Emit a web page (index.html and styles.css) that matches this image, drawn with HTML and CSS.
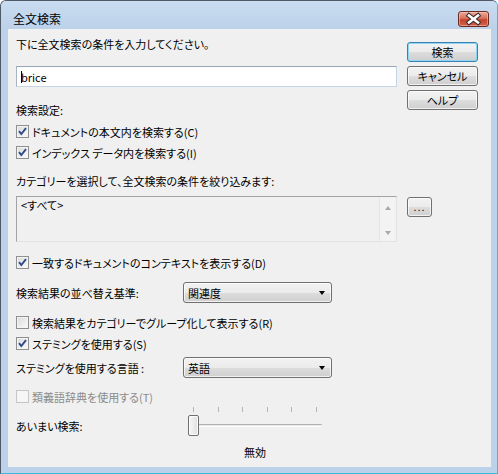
FILE: index.html
```html
<!DOCTYPE html>
<html lang="ja">
<head>
<meta charset="utf-8">
<title>全文検索</title>
<link rel="stylesheet" href="styles.css">
</head>
<body>
<div class="window">
  <div class="titlebar">
    <span class="title">全文検索</span>
    <span class="close"><svg width="29" height="14" viewBox="0 0 29 14"><path d="M10 3.5 L19 10.5 M19 3.5 L10 10.5" stroke="#3a2a28" stroke-width="4.6" stroke-linecap="square"/><path d="M10 3.5 L19 10.5 M19 3.5 L10 10.5" stroke="#ffffff" stroke-width="2.6" stroke-linecap="square"/></svg></span>
  </div>
  <div class="client">
    <div class="top">
      <div class="left-col">
        <div class="text first-label">下に全文検索の条件を入力してください。</div>
        <div class="input"><span class="caret"></span>brice</div>
        <div class="text settings-label">検索設定:</div>
        <div class="check-row first-check">
          <span class="cb"><svg width="11" height="11" viewBox="0 0 11 11"><path d="M2 5.2 L4.3 8 L9 2.2" fill="none" stroke="#2c4a8a" stroke-width="1.9"/></svg></span>
          <span class="text">ドキュメントの本文内を検索する(C)</span>
        </div>
        <div class="check-row">
          <span class="cb"><svg width="11" height="11" viewBox="0 0 11 11"><path d="M2 5.2 L4.3 8 L9 2.2" fill="none" stroke="#2c4a8a" stroke-width="1.9"/></svg></span>
          <span class="text">インデックス データ内を検索する(I)</span>
        </div>
        <div class="text category-label">カテゴリーを選択して、全文検索の条件を絞り込みます:</div>
      </div>
      <div class="buttons">
        <div class="btn default">検索</div>
        <div class="btn">キャンセル</div>
        <div class="btn">ヘルプ</div>
      </div>
    </div>
    <div class="list-row">
      <div class="listbox">
        <div class="list-items text">&lt;すべて&gt;</div>
        <div class="scrollbar"><span class="arr-up"></span><span class="arr-down"></span></div>
      </div>
      <div class="btn dots">...</div>
    </div>
    <div class="check-row context-row">
      <span class="cb"><svg width="11" height="11" viewBox="0 0 11 11"><path d="M2 5.2 L4.3 8 L9 2.2" fill="none" stroke="#2c4a8a" stroke-width="1.9"/></svg></span>
      <span class="text">一致するドキュメントのコンテキストを表示する(D)</span>
    </div>
    <div class="field-row sort-row">
      <span class="field-label text">検索結果の並べ替え基準:</span>
      <div class="combo"><span class="text">関連度</span><span class="combo-arrow"></span></div>
    </div>
    <div class="check-row group-row">
      <span class="cb"></span>
      <span class="text">検索結果をカテゴリーでグループ化して表示する(R)</span>
    </div>
    <div class="check-row">
      <span class="cb"><svg width="11" height="11" viewBox="0 0 11 11"><path d="M2 5.2 L4.3 8 L9 2.2" fill="none" stroke="#2c4a8a" stroke-width="1.9"/></svg></span>
      <span class="text">ステミングを使用する(S)</span>
    </div>
    <div class="field-row lang-row">
      <span class="field-label text">ステミングを使用する言語 :</span>
      <div class="combo"><span class="text">英語</span><span class="combo-arrow"></span></div>
    </div>
    <div class="check-row disabled thesaurus-row">
      <span class="cb"></span>
      <span class="text">類義語辞典を使用する(T)</span>
    </div>
    <div class="slider-row">
      <span class="field-label text fuzzy-label">あいまい検索:</span>
      <div class="slider">
        <div class="ticks"><i></i><i></i><i></i><i></i><i></i><i></i></div>
        <div class="track"></div>
        <div class="thumb"></div>
      </div>
    </div>
    <div class="slider-value text">無効</div>
  </div>
</div>
</body>
</html>
```

FILE: styles.css
```css
html, body {
  margin: 0;
  padding: 0;
}
body {
  width: 498px;
  height: 474px;
  overflow: hidden;
  font-family: "Noto Sans CJK JP", "Noto Sans", sans-serif;
  font-size: 11px;
  line-height: 16px;
  color: #000;
  font-feature-settings: "palt";
}
.window {
  width: 498px;
  height: 474px;
  box-sizing: border-box;
  border: 1px solid #4f5a66;
  border-right-color: #3cbcdc;
  border-bottom-color: #3cbcdc;
  border-radius: 6px 6px 0 0;
  background: #bcd2ea;
  display: flex;
  flex-direction: column;
}
.titlebar {
  height: 28px;
  box-sizing: border-box;
  padding: 10px 8px 2px 12px;
  display: flex;
  align-items: center;
  justify-content: space-between;
  background: linear-gradient(#c9dcf0, #bcd2ea);
  border-radius: 5px 5px 0 0;
}
.title {
  font-size: 12px;
  line-height: 16px;
}
.close {
  width: 31px;
  height: 16px;
  box-sizing: border-box;
  border: 1px solid #6b2a22;
  border-radius: 3px;
  background: linear-gradient(#e9a898 0%, #d8735e 45%, #c4442f 55%, #d0604a 100%);
  box-shadow: inset 0 0 0 1px rgba(255, 220, 210, 0.45);
  display: flex;
  align-items: center;
  justify-content: center;
}
.close svg {
  display: block;
}
.client {
  flex: 1;
  margin: 0 6px 6px 7px;
  background: #f0f0f0;
  padding: 0 13px 0 8px;
  box-sizing: border-box;
}
.top {
  display: flex;
  align-items: flex-start;
}
.left-col {
  width: 381px;
  margin-top: 7px;
}
.first-label {
  height: 16px;
}
.input {
  margin-top: 14px;
  height: 21px;
  box-sizing: border-box;
  border: 1px solid;
  border-color: #9aa7b6 #c3d5e6 #c3d5e6 #a9b4c2;
  background: #fff;
  padding-left: 4px;
  display: flex;
  align-items: center;
  line-height: 16px;
}
.caret {
  display: inline-block;
  width: 1px;
  height: 12px;
  background: #000;
  margin-right: -1px;
}
.settings-label {
  margin-top: 15px;
}
.first-check {
  margin-top: 3px;
}
.check-row {
  display: flex;
  align-items: center;
  height: 21px;
  gap: 3px;
}
.cb {
  width: 13px;
  height: 13px;
  box-sizing: border-box;
  border: 1px solid #8e8f8f;
  background: linear-gradient(135deg, #d9d9d9, #fcfcfc);
  box-shadow: inset 0 0 0 1px #f4f4f4;
  display: flex;
  align-items: center;
  justify-content: center;
  flex-shrink: 0;
}
.cb svg {
  display: block;
}
.disabled .cb {
  border-color: #c6c6c6;
  background: #f6f6f6;
}
.disabled .text {
  color: #8b8b8b;
}
.category-label {
  margin-top: 10px;
}
.buttons {
  margin-top: 13px;
  margin-left: 10px;
  display: flex;
  flex-direction: column;
  gap: 4px;
}
.btn {
  width: 71px;
  height: 20px;
  box-sizing: border-box;
  border: 1px solid #707070;
  border-radius: 3px;
  background: linear-gradient(#f2f2f2 0%, #ebebeb 50%, #dddddd 50%, #cfcfcf 100%);
  box-shadow: inset 0 0 0 1px rgba(255, 255, 255, 0.7);
  display: flex;
  align-items: center;
  justify-content: center;
  line-height: 16px;
}
.btn.default {
  border-color: #3c7fb1;
  box-shadow: inset 0 0 0 1px #8fd6f5;
}
.list-row {
  display: flex;
  align-items: flex-start;
  margin-top: 7px;
}
.listbox {
  width: 381px;
  height: 46px;
  box-sizing: border-box;
  border: 1px solid;
  border-color: #a3a3a3 #e2e2e2 #e2e2e2 #a3a3a3;
  background: #f0f0f0;
  display: flex;
}
.list-items {
  flex: 1;
  padding: 0 4px;
}
.scrollbar {
  width: 17px;
  box-sizing: border-box;
  border-left: 1px solid #e4e4e4;
  background: #f3f3f3;
  display: flex;
  flex-direction: column;
  align-items: center;
  justify-content: space-between;
  padding: 9px 0 6px;
}
.arr-up {
  width: 0;
  height: 0;
  border-left: 3.5px solid transparent;
  border-right: 3.5px solid transparent;
  border-bottom: 4px solid #a9a9a9;
}
.arr-down {
  width: 0;
  height: 0;
  border-left: 3.5px solid transparent;
  border-right: 3.5px solid transparent;
  border-top: 4px solid #a9a9a9;
}
.btn.dots {
  width: 25px;
  height: 20px;
  margin-left: 10px;
  margin-top: 1px;
  font-family: "Liberation Sans", sans-serif;
  font-size: 11px;
  letter-spacing: 1px;
}
.context-row {
  margin-top: 10px;
}
.field-row {
  display: flex;
  align-items: center;
  height: 21px;
}
.field-label {
  width: 167px;
  flex-shrink: 0;
}
.sort-row {
  margin-top: 9px;
}
.group-row {
  margin-top: 9px;
}
.lang-row {
  margin-top: 3px;
}
.thesaurus-row {
  margin-top: 8px;
}
.combo {
  width: 149px;
  height: 21px;
  box-sizing: border-box;
  border: 1px solid #707070;
  border-radius: 3px;
  background: linear-gradient(#f2f2f2 0%, #ebebeb 50%, #dddddd 50%, #cfcfcf 100%);
  box-shadow: inset 0 0 0 1px rgba(255, 255, 255, 0.7);
  display: flex;
  align-items: center;
  justify-content: space-between;
  padding: 0 6px 0 4px;
}
.combo-arrow {
  width: 0;
  height: 0;
  border-left: 3.5px solid transparent;
  border-right: 3.5px solid transparent;
  border-top: 4px solid #000;
}
.slider-row {
  display: flex;
  align-items: flex-start;
  height: 31px;
}
.fuzzy-label {
  margin-top: 11px;
}
.slider {
  position: relative;
  margin-left: 5px;
  width: 136px;
  height: 31px;
}
.ticks {
  display: flex;
  justify-content: space-between;
  margin: 0 7px 0 5px;
  height: 5px;
}
.ticks i {
  display: block;
  width: 1px;
  height: 5px;
  background: #b4b4b4;
}
.track {
  margin-top: 12px;
  width: 134px;
  height: 3px;
  box-sizing: border-box;
  border: 1px solid;
  border-color: #b0b0b0 #e8e8e8 #fdfdfd #b0b0b0;
  background: #e7eaea;
}
.thumb {
  position: absolute;
  left: 0;
  top: 8px;
  width: 11px;
  height: 21px;
  box-sizing: border-box;
  border: 1px solid #707070;
  border-radius: 2px;
  background: linear-gradient(90deg, #f7f7f7, #e0e0e0);
  box-shadow: inset 0 0 0 1px rgba(255, 255, 255, 0.8);
}
.slider-value {
  margin-top: 6px;
  margin-left: 172px;
  width: 134px;
  text-align: center;
}
```
